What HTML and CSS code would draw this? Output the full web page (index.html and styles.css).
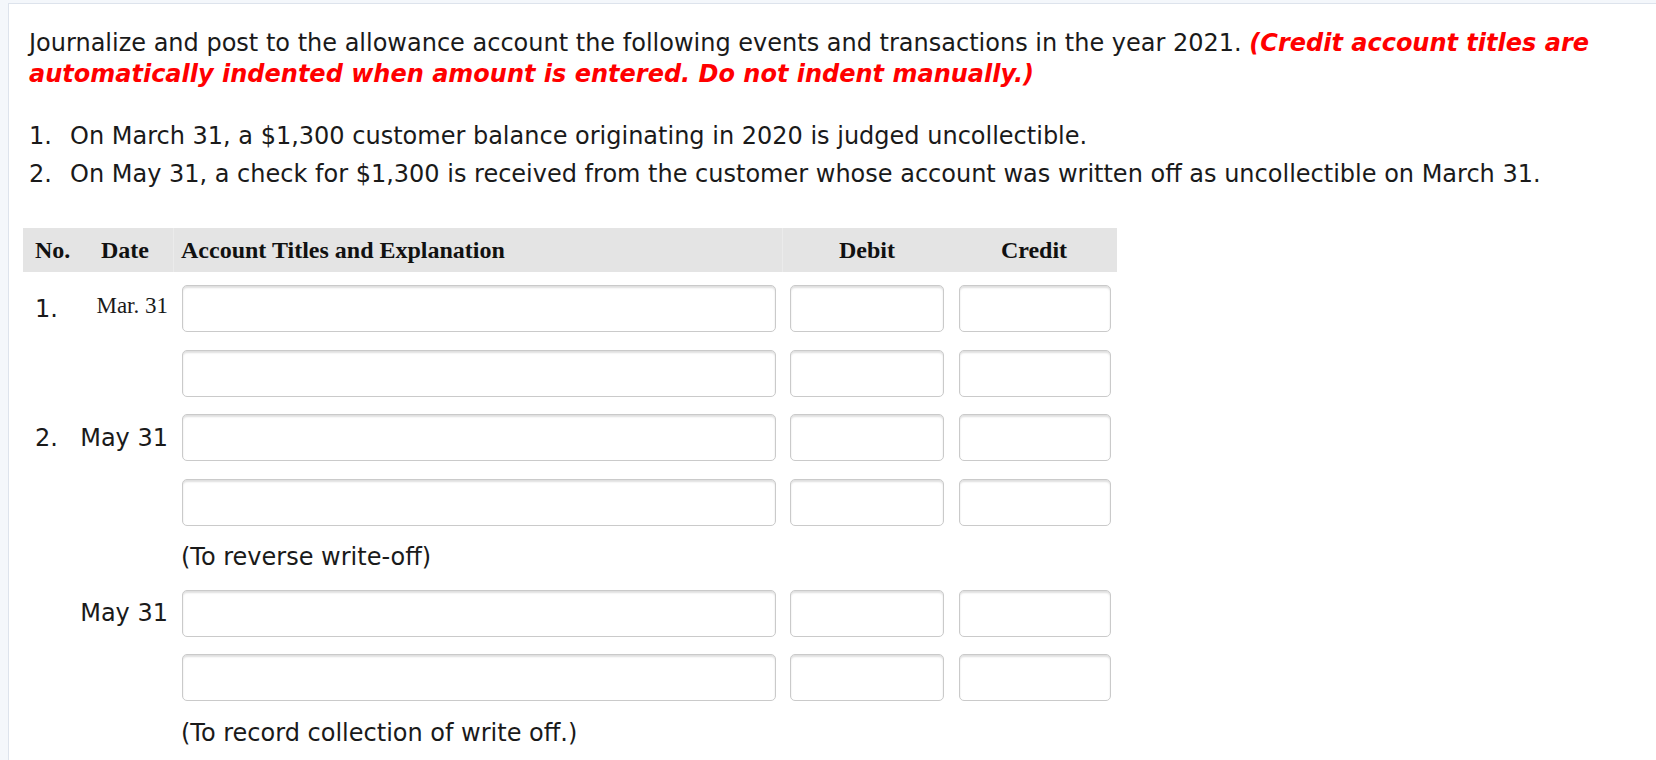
FILE: index.html
```html
<!DOCTYPE html>
<html>
<head>
<meta charset="utf-8">
<link rel="stylesheet" href="styles.css">
</head>
<body>
<div class="page">
  <p class="intro">Journalize and post to the allowance account the following events and transactions in the year 2021. <em class="warn">(Credit account titles are</em> <em class="warn">automatically indented when amount is entered. Do not indent manually.)</em></p>
  <ol class="events">
    <li><span class="num">1.</span><span>On March 31, a $1,300 customer balance originating in 2020 is judged uncollectible.</span></li>
    <li><span class="num">2.</span><span>On May 31, a check for $1,300 is received from the customer whose account was written off as uncollectible on March 31.</span></li>
  </ol>

  <div class="journal">
    <div class="jhead">
      <div class="h-no">No.</div>
      <div class="h-date">Date</div>
      <div class="h-acct">Account Titles and Explanation</div>
      <div class="h-amt">Debit</div>
      <div class="h-amt h-credit">Credit</div>
    </div>

    <div class="jrow">
      <div class="c-no">1.</div>
      <div class="c-date serif">Mar. 31</div>
      <div class="c-acct"><input class="field" type="text"></div>
      <div class="c-debit"><input class="field" type="text"></div>
      <div class="c-credit"><input class="field" type="text"></div>
    </div>
    <div class="jrow">
      <div class="c-no"></div>
      <div class="c-date"></div>
      <div class="c-acct"><input class="field" type="text"></div>
      <div class="c-debit"><input class="field" type="text"></div>
      <div class="c-credit"><input class="field" type="text"></div>
    </div>
    <div class="jrow">
      <div class="c-no">2.</div>
      <div class="c-date">May 31</div>
      <div class="c-acct"><input class="field" type="text"></div>
      <div class="c-debit"><input class="field" type="text"></div>
      <div class="c-credit"><input class="field" type="text"></div>
    </div>
    <div class="jrow">
      <div class="c-no"></div>
      <div class="c-date"></div>
      <div class="c-acct"><input class="field" type="text"></div>
      <div class="c-debit"><input class="field" type="text"></div>
      <div class="c-credit"><input class="field" type="text"></div>
    </div>
    <div class="jnote"><div class="c-acct note">(To reverse write-off)</div></div>

    <div class="jrow">
      <div class="c-no"></div>
      <div class="c-date">May 31</div>
      <div class="c-acct"><input class="field" type="text"></div>
      <div class="c-debit"><input class="field" type="text"></div>
      <div class="c-credit"><input class="field" type="text"></div>
    </div>
    <div class="jrow">
      <div class="c-no"></div>
      <div class="c-date"></div>
      <div class="c-acct"><input class="field" type="text"></div>
      <div class="c-debit"><input class="field" type="text"></div>
      <div class="c-credit"><input class="field" type="text"></div>
    </div>
    <div class="jnote"><div class="c-acct note">(To record collection of write off.)</div></div>
  </div>
</div>
</body>
</html>
```

FILE: styles.css
```css
html, body {
  margin: 0;
  padding: 0;
  background: #f4f7fb;
  height: 100%;
  overflow: hidden;
}

.page {
  margin: 3px 0 0 8px;
  border-top: 1px solid #dde3ec;
  border-left: 1px solid #dde3ec;
  background: #ffffff;
  min-height: 760px;
  padding: 24px 0 0 14px;
  box-sizing: border-box;
  font-family: "DejaVu Sans", Verdana, sans-serif;
  font-size: 24px;
  color: #1a1a1a;
}

.intro {
  margin: 0;
  padding-left: 6px;
  padding-right: 16px;
  line-height: 30.6px;
}

.warn {
  color: #ff0000;
  font-weight: bold;
  font-style: italic;
}

.events {
  list-style: none;
  margin: 28px 0 0 0;
  padding: 0 0 0 6px;
}

.events li {
  display: flex;
  line-height: 38px;
}

.events .num {
  width: 41px;
  flex: none;
}

.journal {
  margin-top: 35px;
  width: 1094px;
}

.jhead,
.jrow,
.jnote {
  display: grid;
  grid-template-columns: 52px 98px 609px 169px 166px;
}

.jhead {
  height: 44px;
  align-items: center;
  background: #e4e4e4;
  font-family: "Liberation Serif", "Times New Roman", serif;
  font-weight: bold;
  font-size: 24px;
  color: #111;
  margin-bottom: 13px;
}

.jhead > div {
  height: 100%;
  display: flex;
  align-items: center;
  white-space: nowrap;
}

.h-no { padding-left: 12px; }
.h-date { padding-left: 26px; }
.h-acct { padding-left: 7px; border-left: 1px solid #ebebeb; }
.h-amt { justify-content: center; border-left: 1px solid #ebebeb; }
.h-credit { border-left: none; }

.jrow {
  height: 47px;
  align-items: center;
  margin-bottom: 17.5px;
}

.c-no { padding-left: 12px; white-space: nowrap; }
.c-date {
  text-align: right;
  padding-right: 5px;
  white-space: nowrap;
}
.serif {
  font-family: "Liberation Serif", "Times New Roman", serif;
  font-size: 23px;
  position: relative;
  top: -3px;
}

.c-acct { padding: 0 6px 0 9px; }
.c-debit { padding: 0 7px 0 8px; }
.c-credit { padding: 0 6px 0 8px; }

.field {
  display: block;
  width: 100%;
  height: 47px;
  box-sizing: border-box;
  margin: 0;
  border: 1px solid #cacaca;
  border-radius: 5px;
  background: #fff;
  box-shadow: inset 0 2px 2px rgba(0, 0, 0, 0.13);
  outline: none;
}

.jnote {
  height: 29px;
  line-height: 29px;
  margin-bottom: 17.5px;
}

.note {
  grid-column: 3 / 6;
  padding-left: 8px;
  white-space: nowrap;
}
```
